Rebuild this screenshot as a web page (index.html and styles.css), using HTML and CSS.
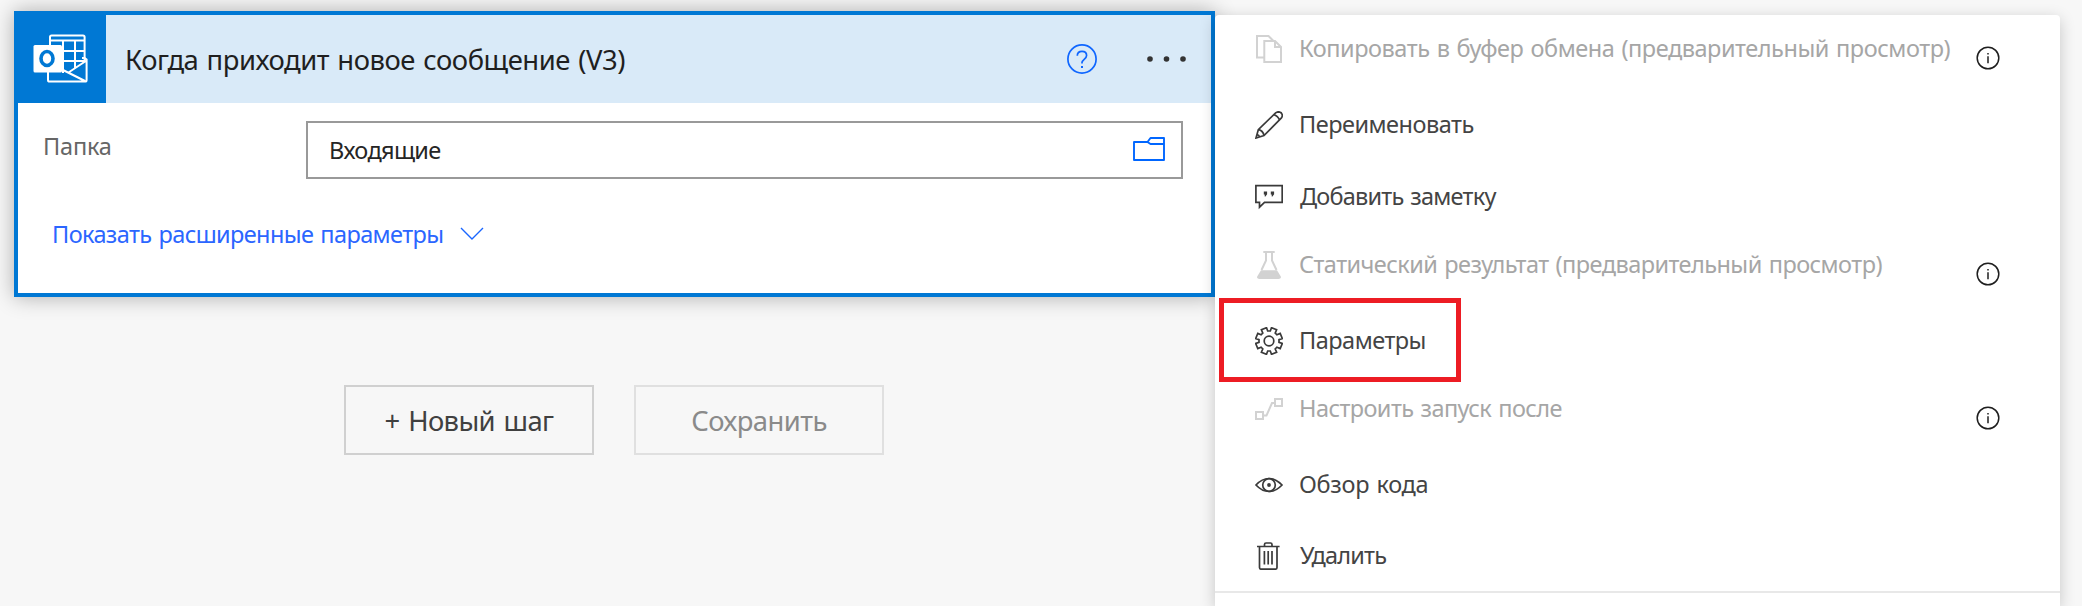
FILE: index.html
```html
<!DOCTYPE html>
<html lang="ru">
<head>
<meta charset="utf-8">
<title>Когда приходит новое сообщение (V3)</title>
<link rel="stylesheet" href="styles.css">
</head>
<body>
<main class="designer">
  <section class="flow">
    <article class="card">
      <header class="card-header">
        <svg class="connector" viewBox="0 0 88 88" fill="none" stroke="#fff" stroke-width="2">
          <path d="M32 31V22q0-1.6 1.6-1.6H65q1.6 0 1.6 1.6V46M32 25.6H66.6M45 25.6V58M57 25.6V53M45 36H66.6M45 46H66.6"/>
          <path d="M64 43h2.6l2 1.6V65q0 1.6-1.6 1.6H31.6Q30 66.600 30 65V57M43 54L67 66M50.500 57.500L68.600 45.500"/>
          <rect x="15.500" y="30" width="28.500" height="27.500" rx="1.500" fill="#fff" stroke="none"/>
          <ellipse cx="29" cy="43.500" rx="6" ry="7" stroke="#0078d4" stroke-width="3.600"/>
        </svg>
        <h1 class="card-title">Когда приходит новое сообщение (V3)</h1>
        <svg class="help" viewBox="0 0 30 30" fill="none" stroke="#0f66ff" stroke-width="1.700">
          <circle cx="15" cy="15" r="14.100"/>
          <path d="M10.300 11.800c0-2.700 2-4.400 4.700-4.400s4.600 1.700 4.600 4.200c0 3.400-4.600 4-4.600 7v.900"/>
          <path d="M14 23.100h2" stroke-width="2"/>
        </svg>
        <svg class="more" viewBox="0 0 40 6" fill="#333">
          <circle cx="3" cy="3" r="2.800"/><circle cx="19.500" cy="3" r="2.800"/><circle cx="36" cy="3" r="2.800"/>
        </svg>
      </header>
      <div class="card-body">
        <div class="field-row">
          <label class="field-label">Папка</label>
          <div class="field">
            <span class="field-value">Входящие</span>
            <svg class="folder" viewBox="0 0 32 24" fill="none" stroke="#0066ff" stroke-width="1.900" stroke-linejoin="round">
              <path d="M1 5H14.500L17.500 1H31V23H1ZM14.500 5L17.500 7H31"/>
            </svg>
          </div>
        </div>
        <a class="advanced"><span class="advanced-text">Показать расширенные параметры</span>
          <svg class="chevron" viewBox="0 0 24 13" fill="none" stroke="#1a66ff" stroke-width="1.400"><path d="M1 1L12 12L23 1"/></svg>
        </a>
      </div>
    </article>
    <div class="actions">
      <button class="button new-step">+ Новый шаг</button>
      <button class="button save" disabled>Сохранить</button>
    </div>
  </section>

  <nav class="menu">
    <div class="item disabled">
      <svg class="icon" viewBox="0 0 28 28"><path d="M9 22.500H2V1H13.500L18.500 6M9.300 6H20L26 12V27H9.300ZM20 6V12H26"/></svg>
      <span class="label copy">Копировать в буфер обмена (предварительный просмотр)</span>
      <svg class="info" viewBox="0 0 24 24"><circle cx="12" cy="12" r="10.800"/><path d="M12 10.300V17.300M12 6.900V8.500"/></svg>
    </div>
    <div class="item">
      <svg class="icon" viewBox="0 0 28 28"><path d="M1 27L3.300 18.700L20.600 1.900Q22 .800 23.700 .800Q27.200 1.200 27.300 4.500Q27.200 6 26.200 7.200L9 24.500ZM18.800 3.700Q23 4.800 24.400 9M3.300 18.700Q8 19.600 9 24.500M2 23.500Q4 24 4.600 26"/></svg>
      <span class="label rename">Переименовать</span>
    </div>
    <div class="item">
      <svg class="icon" viewBox="0 0 28 28"><path d="M.900 2.600H27.200V19.400H9.500L4.500 24.200V19.400H.900Z"/><path class="solid" d="M8.800 8.600h3.300v2.600l-1.600 2.200h-.800v-2h-.900zM15.800 8.600h3.300v2.600l-1.600 2.200h-.800v-2h-.900z"/></svg>
      <span class="label note">Добавить заметку</span>
    </div>
    <div class="item disabled">
      <svg class="icon" viewBox="0 0 28 28"><path d="M8.300 1H19.700M11 1V9.500L6.500 19M17 1V9.500L21.500 19"/><path class="solid" d="M6 19.200H22L25.800 25.600Q26.200 28 23.600 28H4.400Q1.800 28 2.200 25.600Z"/></svg>
      <span class="label static">Статический результат (предварительный просмотр)</span>
      <svg class="info" viewBox="0 0 24 24"><circle cx="12" cy="12" r="10.800"/><path d="M12 10.300V17.300M12 6.900V8.500"/></svg>
    </div>
    <div class="item highlighted">
      <svg class="icon" viewBox="0 0 28 28"><g transform="translate(14 14)"><path d="M1.300-10L2.500-13.300L7.600-11.200L6.200-7.900L7.900-6.200L11.200-7.600L13.300-2.500L10-1.300V1.300L13.300 2.500L11.200 7.600L7.900 6.200L6.200 7.900L7.600 11.200L2.500 13.300L1.300 10H-1.300L-2.500 13.300L-7.600 11.200L-6.200 7.900L-7.900 6.200L-11.200 7.600L-13.300 2.500L-10 1.300V-1.300L-13.300-2.500L-11.200-7.600L-7.900-6.200L-6.200-7.900L-7.600-11.200L-2.500-13.300L-1.300-10Z"/><circle r="4.800"/></g></svg>
      <span class="label settings">Параметры</span>
    </div>
    <div class="item disabled">
      <svg class="icon" viewBox="0 0 28 28"><path d="M1 17H8V24H1ZM20 4H27V11H20ZM8 20.500H11.500L17 8H20"/></svg>
      <span class="label run-after">Настроить запуск после</span>
      <svg class="info" viewBox="0 0 24 24"><circle cx="12" cy="12" r="10.800"/><path d="M12 10.300V17.300M12 6.900V8.500"/></svg>
    </div>
    <div class="item">
      <svg class="icon" viewBox="0 0 28 28"><path d="M1 14Q7 7.500 14 7.500T27 14Q21 20.500 14 20.500T1 14Z"/><circle cx="14" cy="14" r="6.300"/><circle class="solid" cx="14" cy="14" r="1.900"/></svg>
      <span class="label code">Обзор кода</span>
    </div>
    <div class="item last">
      <svg class="icon" viewBox="0 0 28 28"><path d="M2 4.500H24.600M4.500 4.500V25.500Q4.500 27.200 6.200 27.200H20.300Q22 27.200 22 25.500V4.500M9.500 4.500V2.500Q9.500 1 11 1H15.500Q17 1 17 2.500V4.500M9.400 9V22.500M13.200 9V22.500M17 9V22.500"/></svg>
      <span class="label delete">Удалить</span>
    </div>
  </nav>
</main>
</body>
</html>
```
FILE: styles.css
```css
*, *::before { box-sizing: border-box; }

body {
  margin: 0;
  height: 606px;
  overflow: hidden;
  background: #f7f7f7;
  font-family: "Noto Sans", "Open Sans", sans-serif;
  font-size: 23.5px;
  line-height: 32px;
  white-space: nowrap;
  word-spacing: 1.5px;
}

svg { display: block; flex: none; }

.designer { display: flex; height: 606px; padding-left: 14px; }

.flow { width: 1201px; padding-top: 11px; flex: none; }

.card {
  height: 286px;
  border: 4px solid #0078d4;
  background: #fff;
  box-shadow: 0 0 20px rgba(0, 0, 0, .3);
}

.card-header { display: flex; align-items: center; height: 88px; background: #d9eaf8; }
.connector { width: 88px; height: 88px; background: #0078d4; }

.card-title {
  flex: 1;
  margin: 0;
  padding: 2px 0 0 19px;
  color: #1f1f1f;
  font-size: 27.4px;
  font-weight: 400;
  letter-spacing: -.44px;
}

.help { width: 30px; height: 30px; margin-right: 50px; }
.more { width: 40px; height: 6px; margin-right: 24px; }

.card-body { padding: 18px 28px 0 25px; }
.field-row { display: flex; height: 58px; }
.field-label { width: 263px; padding-top: 9px; color: #666; letter-spacing: -.2px; }

.field {
  display: flex;
  flex: 1;
  align-items: center;
  justify-content: space-between;
  border: 2px solid #999;
  padding: 0 16px 0 21px;
}
.field-value { color: #252525; letter-spacing: -.64px; }
.folder { width: 32px; height: 24px; margin-bottom: 2px; }

.advanced { display: flex; align-items: center; gap: 17px; margin-top: 39px; padding-left: 9px; color: #2b66ff; }
.advanced-text { letter-spacing: -.6px; }
.chevron { width: 24px; height: 13px; margin-bottom: 2px; }

.actions { display: flex; gap: 40px; margin: 88px 0 0 330px; }
.button {
  width: 250px;
  height: 70px;
  padding: 0;
  border: 2px solid #d0d0d0;
  background: transparent;
  color: #404040;
  font-family: inherit;
  font-size: 27.4px;
  letter-spacing: -.6px;
  word-spacing: 2px;
}
.save { border-color: #e0e0e0; color: #8a8a8a; letter-spacing: -.56px; }

.menu {
  flex: none;
  width: 845px;
  height: 591px;
  margin-top: 15px;
  padding-top: 2px;
  border-radius: 4px 4px 0 0;
  background: #fff;
  box-shadow: 0 4px 16px rgba(0, 0, 0, .2);
}

.item { position: relative; display: flex; align-items: center; height: 72px; padding: 0 60px 0 40px; color: #444; }
.item.last { border-bottom: 2px solid #e8e8e8; }
.item.disabled { color: #a6a6a6; }
.icon { width: 28px; height: 28px; fill: none; stroke: #3a3a3a; stroke-width: 1.7; }
.solid { fill: #3a3a3a; stroke: none; }
.disabled .icon { margin-bottom: 8px; stroke: #d2d2d2; stroke-width: 2; }
.disabled .solid { fill: #d2d2d2; }
.label { padding: 0 0 2px 16px; }
.disabled .label { padding-bottom: 11px; }
.info { width: 24px; height: 24px; margin: 10px 0 0 auto; fill: none; stroke: #1f1f1f; stroke-width: 1.5; }

.highlighted::before {
  content: "";
  position: absolute;
  top: -7px;
  left: 4px;
  width: 242px;
  height: 84px;
  border: 5px solid #ed1c24;
}

.copy { letter-spacing: -.46px; }
.rename { letter-spacing: -.5px; }
.note { padding-left: 17px; letter-spacing: -.78px; }
.static { letter-spacing: -.55px; }
.settings { letter-spacing: -.5px; }
.run-after { letter-spacing: -.57px; }
.code { letter-spacing: -.3px; }
.delete { padding-left: 17px; letter-spacing: -.75px; }
```
